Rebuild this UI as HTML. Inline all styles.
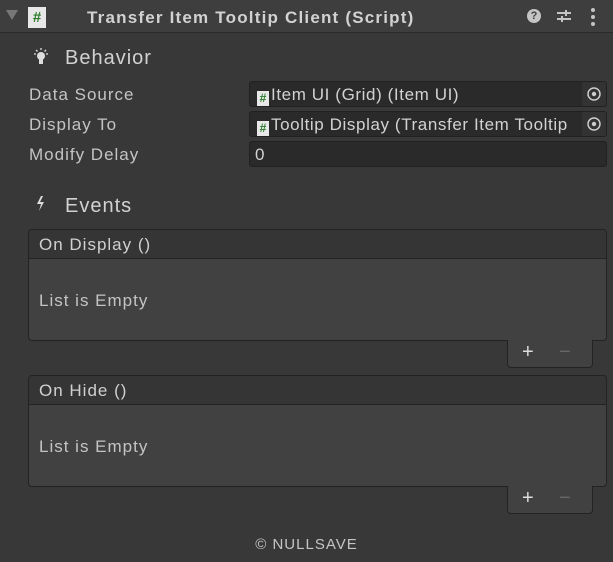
<!DOCTYPE html><html><head><style>
body{margin:0;width:613px;height:562px;background:#383838;font-family:"Liberation Sans",sans-serif;color:#c4c4c4;position:relative;overflow:hidden;letter-spacing:1px}
.a{position:absolute}
.hdr{left:0;top:0;width:613px;height:32px;background:#3e3e3e;border-bottom:1px solid #2a2a2a}
.lbl{left:29px;font-size:17px;color:#c4c4c4}
.fld{left:249px;width:356px;height:24px;background:#2a2a2a;border:1px solid #212121;border-radius:3px;font-size:17px;color:#d2d2d2;line-height:26px;white-space:nowrap;overflow:hidden;letter-spacing:0.6px}
.ic{display:inline-block;width:12px;height:15px;background:#e8e8e8;color:#2a7a2a;font-size:12px;font-weight:bold;line-height:15px;text-align:center;vertical-align:-2px;margin:0 2px 0 7px;letter-spacing:0}
.tgt{position:absolute;right:0;top:0;width:24px;height:24px;background:#333;text-align:center}
.box{left:28px;width:577px;border:1px solid #232323;border-radius:4px;background:#414141;overflow:hidden}
.bh{height:28px;background:#353535;border-bottom:1px solid #232323;font-size:17px;line-height:30px;padding-left:10px;color:#d0d0d0}
.ft{left:507px;width:84px;height:27px;background:#414141;border:1px solid #232323;border-top:none;border-radius:0 0 4px 4px;font-size:20px}
</style></head><body>
<div class="a hdr"></div>
<div class="a" style="left:6px;top:10px;width:0;height:0;border-left:6px solid transparent;border-right:6px solid transparent;border-top:10px solid #777"></div>
<div class="a" style="left:28px;top:7px;width:18px;height:21px;background:#e8e8e8;color:#2a7a2a;font-weight:bold;font-size:15px;text-align:center;line-height:21px;letter-spacing:0">#</div>
<div class="a" style="left:87px;top:8px;font-size:17px;font-weight:bold;color:#d2d2d2;letter-spacing:1.2px">Transfer Item Tooltip Client (Script)</div>
<div class="a" style="left:527px;top:9px;width:14px;height:14px;border-radius:50%;background:#c4c4c4;color:#3e3e3e;font-size:11px;font-weight:bold;text-align:center;line-height:14px;letter-spacing:0">?</div>
<svg class="a" style="left:555px;top:8px" width="18" height="16"><path d="M2 5h14M2 11h14M11 2v6M7 8v6" stroke="#c4c4c4" stroke-width="2"/></svg>
<svg class="a" style="left:590px;top:8px" width="6" height="18"><circle cx="3" cy="2" r="2" fill="#c4c4c4"/><circle cx="3" cy="9" r="2" fill="#c4c4c4"/><circle cx="3" cy="16" r="2" fill="#c4c4c4"/></svg>
<svg class="a" style="left:33px;top:48px" width="16" height="18"><circle cx="8" cy="8" r="4" fill="#ddd"/><rect x="6" y="11" width="4" height="5" fill="#ddd"/><path d="M8 0v2M1 6h2M13 6h2M3 2l1.5 1.5M13 2l-1.5 1.5" stroke="#ddd" stroke-width="1.3"/></svg>
<div class="a" style="left:65px;top:47px;font-size:20px;color:#d2d2d2">Behavior</div>
<div class="a lbl" style="top:85px">Data Source</div>
<div class="a lbl" style="top:115px">Display To</div>
<div class="a lbl" style="top:145px">Modify Delay</div>
<div class="a fld" style="top:81px"><span class="ic">#</span>Item UI (Grid) (Item UI)<div class="tgt"><svg width="24" height="24"><circle cx="12" cy="12" r="6" fill="none" stroke="#ccc" stroke-width="1.5"/><circle cx="12" cy="12" r="2.2" fill="#ccc"/></svg></div></div>
<div class="a fld" style="top:111px"><span class="ic">#</span>Tooltip Display (Transfer Item Tooltip<div class="tgt"><svg width="24" height="24"><circle cx="12" cy="12" r="6" fill="none" stroke="#ccc" stroke-width="1.5"/><circle cx="12" cy="12" r="2.2" fill="#ccc"/></svg></div></div>
<div class="a fld" style="top:141px;padding-left:5px;width:351px">0</div>
<svg class="a" style="left:35px;top:196px" width="12" height="16"><path d="M6 0L2 8h4l-2 7 5-9H5l3-6z" fill="#ddd"/></svg>
<div class="a" style="left:65px;top:195px;font-size:20px;color:#d2d2d2">Events</div>
<div class="a box" style="top:229px;height:110px"><div class="bh">On Display ()</div><div style="padding:32px 0 0 10px;font-size:17px">List is Empty</div></div>
<div class="a ft" style="top:340px"><span class="a" style="left:14px;top:1px;color:#ddd">+</span><span class="a" style="left:51px;top:1px;color:#666">−</span></div>
<div class="a box" style="top:375px;height:110px"><div class="bh">On Hide ()</div><div style="padding:32px 0 0 10px;font-size:17px">List is Empty</div></div>
<div class="a ft" style="top:486px"><span class="a" style="left:14px;top:1px;color:#ddd">+</span><span class="a" style="left:51px;top:1px;color:#666">−</span></div>
<div class="a" style="left:0;width:613px;top:536px;text-align:center;font-size:15px;color:#c4c4c4">© NULLSAVE</div>
</body></html>
